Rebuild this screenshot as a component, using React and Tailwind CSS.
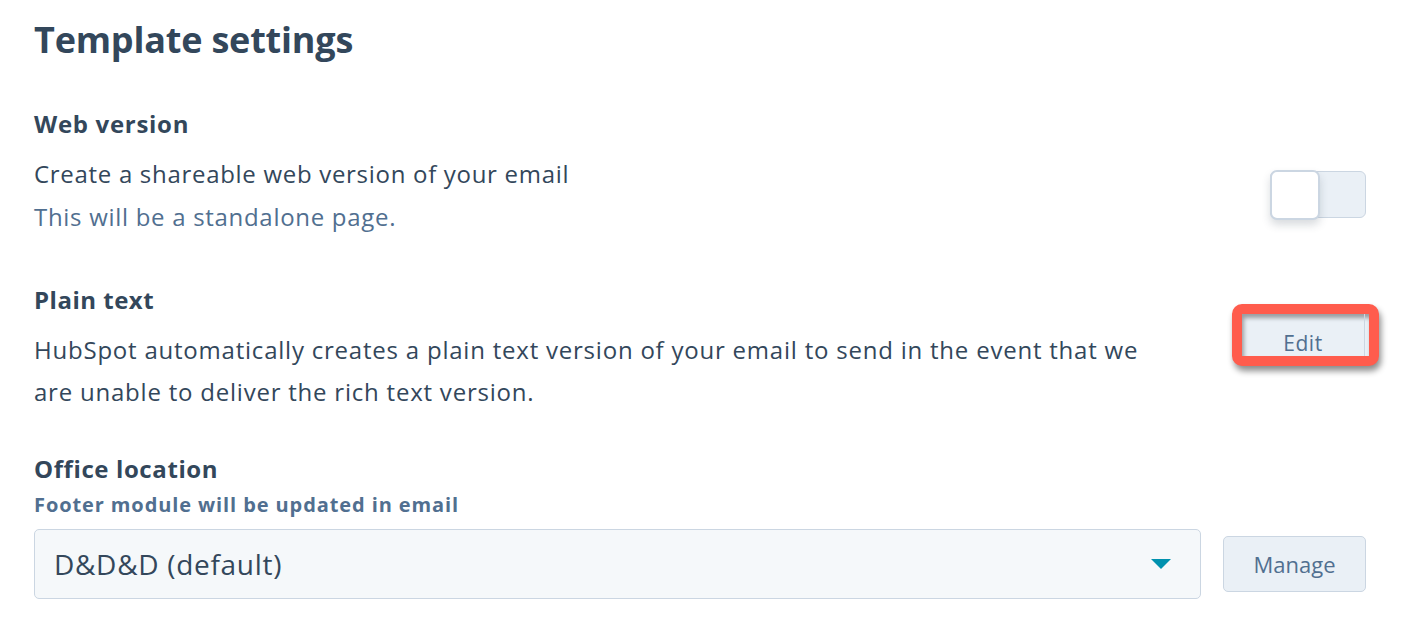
const Toggle = () => (
  <div className="relative w-[96px] h-[47px] rounded-[6px] bg-[#eaf0f6] border border-[#cbd6e2]">
    <div className="absolute -left-px -top-[2px] w-[50px] h-[50px] rounded-[7px] bg-white border-2 border-[#cbd6e2] shadow-[0_5px_8px_rgba(45,62,80,0.18)]" />
  </div>
);

const App = () => {
  return (
    <div
      className="min-h-screen bg-white text-[#33475b] pl-[34px] pr-[54px] pt-[18px]"
      style={{ fontFamily: '"Open Sans", "Liberation Sans", sans-serif' }}
    >
      <h1 className="text-[36px] leading-[44px] font-bold tracking-[-0.2px]">Template settings</h1>

      <section className="mt-[46px] flex items-start justify-between">
        <div>
          <h2 className="text-[24px] leading-[32px] font-bold tracking-[0.7px]">Web version</h2>
          <div className="mt-[12px] text-[24px] leading-[43px] tracking-[0.7px]">
            <p>Create a shareable web version of your email</p>
            <p className="text-[#516f90]">This will be a standalone page.</p>
          </div>
        </div>
        <div className="mt-[63px]">
          <Toggle />
        </div>
      </section>

      <section className="mt-[46px] flex items-start justify-between">
        <div>
          <h2 className="text-[24px] leading-[32px] font-bold tracking-[0.5px]">Plain text</h2>
          <p className="mt-[13px] text-[24px] leading-[42px] tracking-[0.78px]">
            HubSpot automatically creates a plain text version of your email to send in the event that we
            <br />
            are unable to deliver the rich text version.
          </p>
        </div>
        <div className="mt-[20px] -mr-[13px] w-[147px] h-[62px] rounded-[10px] border-[10px] border-[#ff5c4d] shadow-[2px_5px_6px_rgba(0,0,0,0.45),inset_2px_4px_4px_rgba(0,0,0,0.35)] overflow-hidden flex bg-[#eaf0f6]">
          <button className="w-[123px] h-full pt-[14px] border-r border-[#cbd6e2] text-[21px] tracking-[0.6px] text-[#516f90]">
            Edit
          </button>
        </div>
      </section>

      <section className="mt-[40px]">
        <h2 className="text-[24px] leading-[32px] font-bold tracking-[0.6px]">Office location</h2>
        <p className="mt-[6px] text-[20px] leading-[28px] font-bold tracking-[0.9px] text-[#516f90]">
          Footer module will be updated in email
        </p>
        <div className="mt-[10px] flex items-center gap-[22px]">
          <div className="flex-1 h-[70px] rounded-[5px] bg-[#f5f8fa] border border-[#cbd6e2] flex items-center justify-between pl-[19px] pr-[29px]">
            <span className="text-[28px] tracking-[0.7px]">D&amp;D&amp;D (default)</span>
            <svg width="20" height="10" viewBox="0 0 20 10">
              <path d="M0 0 H20 L10 10 Z" fill="#0091ae" />
            </svg>
          </div>
          <button className="w-[143px] h-[56px] rounded-[5px] bg-[#eaf0f6] border border-[#cbd6e2] text-[22px] text-[#516f90]">
            Manage
          </button>
        </div>
      </section>
    </div>
  );
};

export default App;
